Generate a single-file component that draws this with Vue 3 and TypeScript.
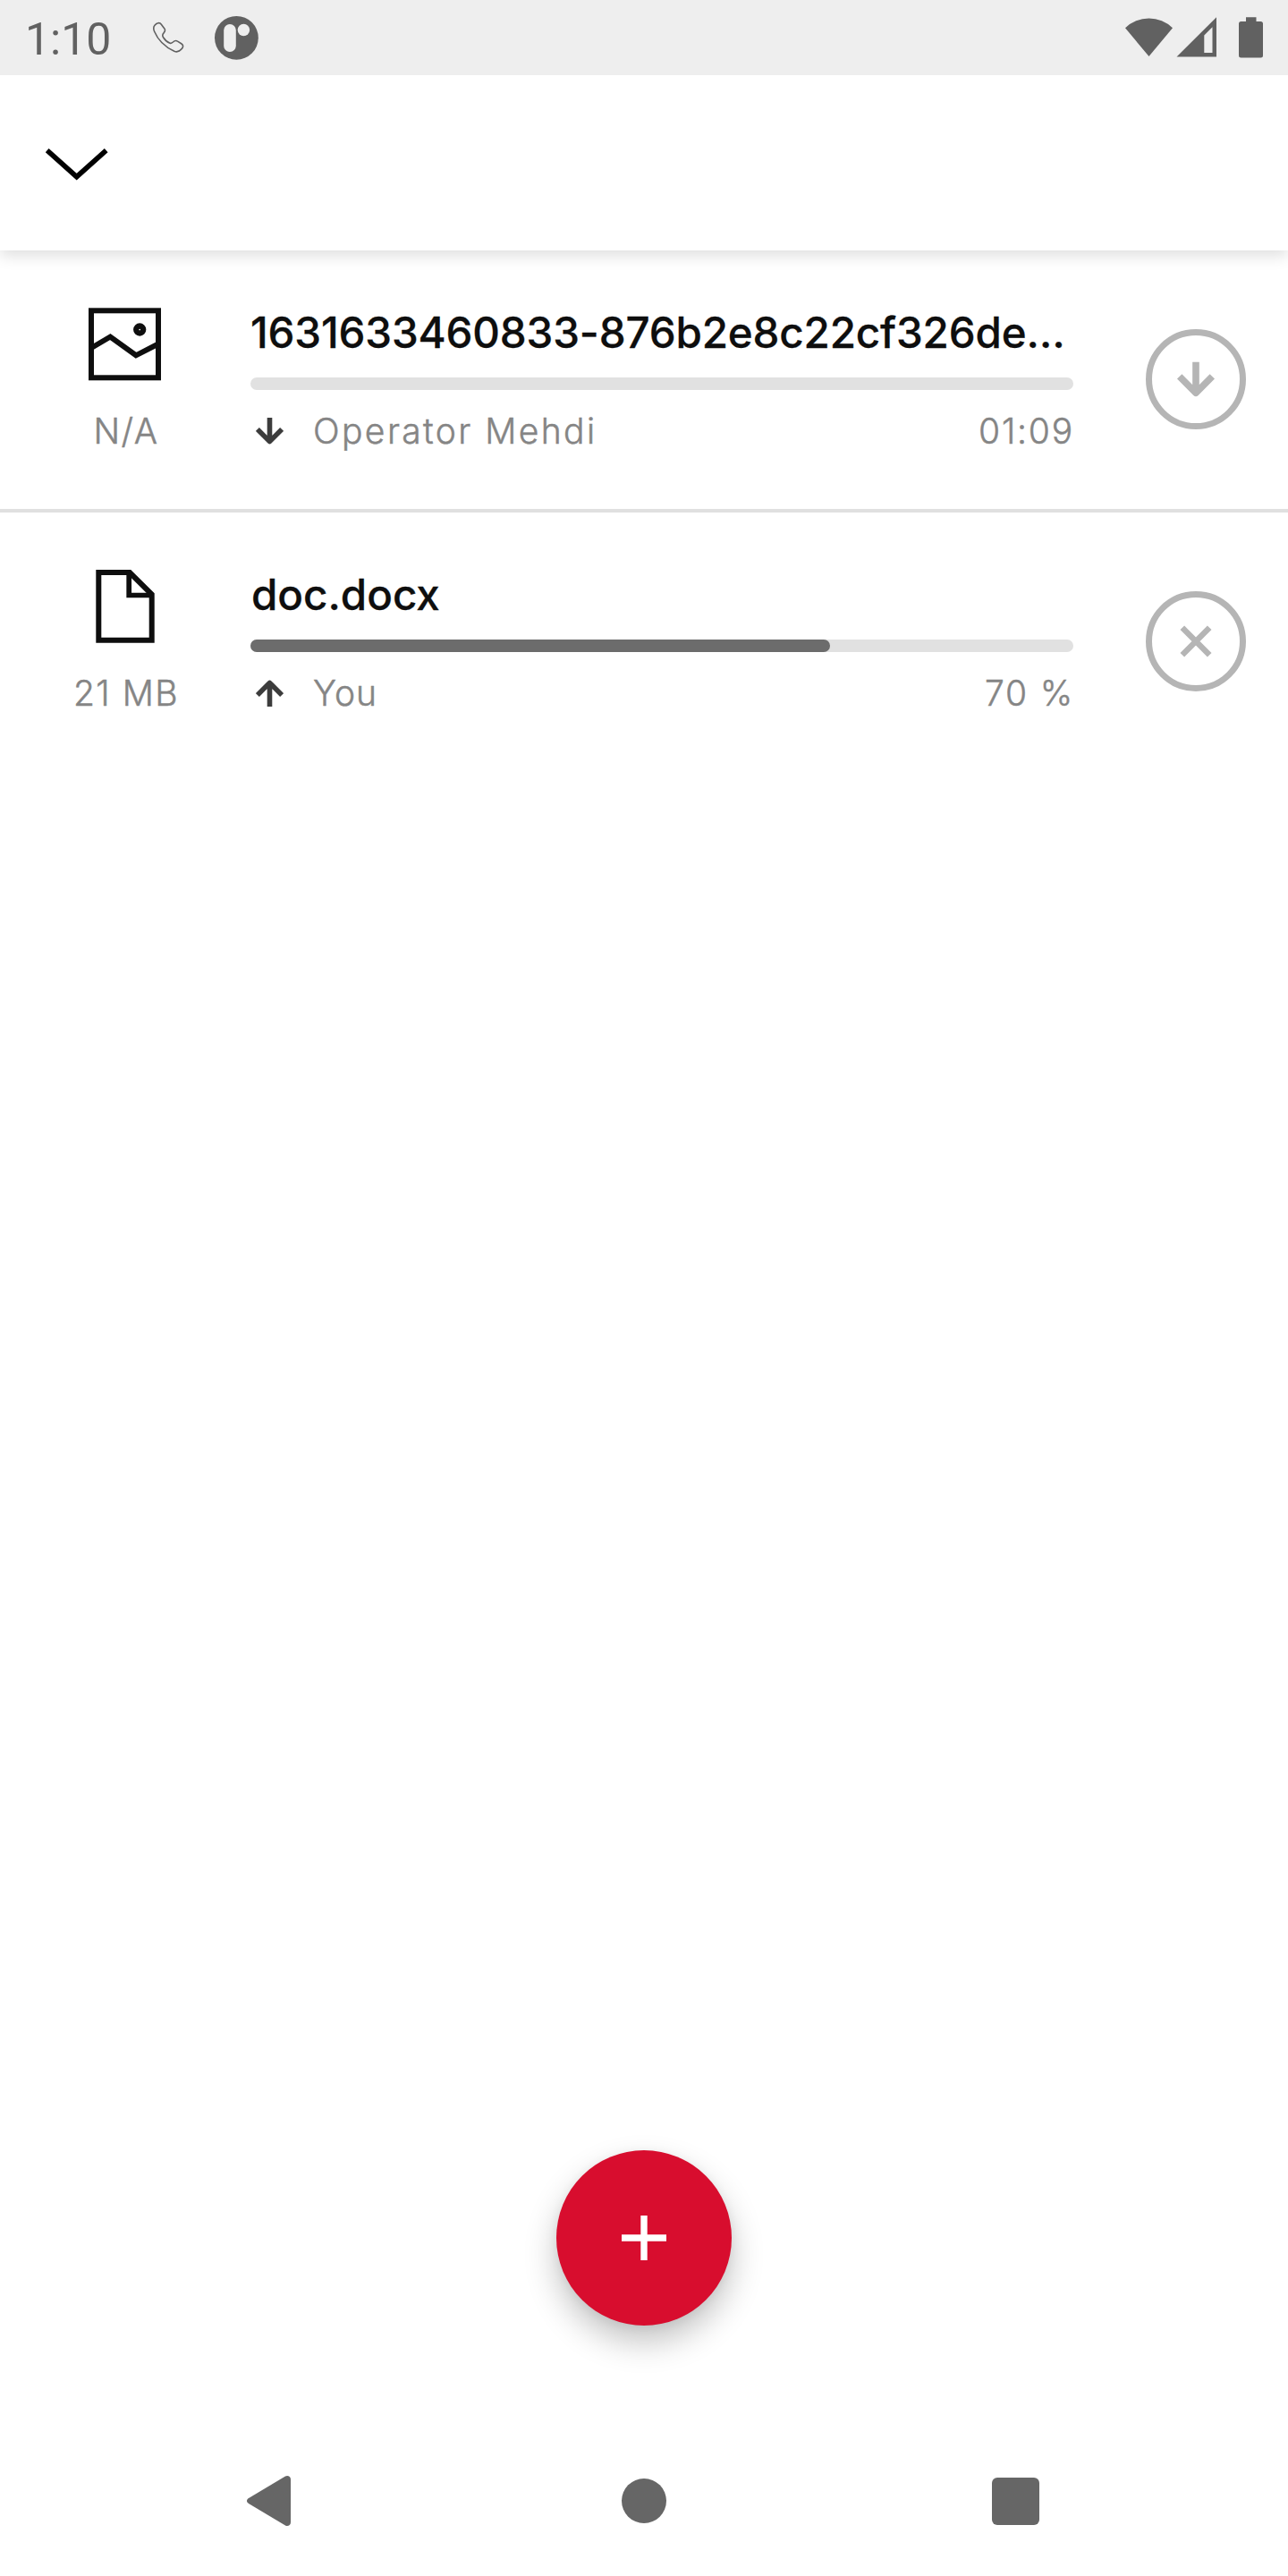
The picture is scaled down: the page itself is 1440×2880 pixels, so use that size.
<script setup lang="ts">
interface Transfer {
  id: string
  kind: 'image' | 'file'
  name: string
  size: string
  direction: 'down' | 'up'
  author: string
  status: string
  progress: number
  action: 'download' | 'cancel'
}

const TRACK = 920
const CAP = 14

const transfers: Transfer[] = [
  {
    id: 'photo',
    kind: 'image',
    name: '1631633460833-876b2e8c22cf326de…',
    size: 'N/A',
    direction: 'down',
    author: 'Operator Mehdi',
    status: '01:09',
    progress: 0,
    action: 'download',
  },
  {
    id: 'doc',
    kind: 'file',
    name: 'doc.docx',
    size: '21 MB',
    direction: 'up',
    author: 'You',
    status: '70 %',
    progress: 0.7,
    action: 'cancel',
  },
]

const fillWidth = (p: number): string => `${(TRACK - CAP) * p + CAP}px`
</script>

<template>
  <div class="screen">
    <header class="status-bar">
      <span class="clock">1:10</span>
      <svg class="phone" width="36" height="36" viewBox="0 0 36 36" fill="none" stroke="#616161" stroke-width="1.600">
        <path d="M3 4.2C5.500 1.200 8.600.800 10.300 3.200L14 8.200C15 9.800 14.600 11 13.200 12.600C11.200 14.600 11.400 16 12.500 17.700C14.500 20.900 17 23 20 24.200C21.700 24.800 22.600 24 23.800 22.800C25.200 21.300 27 21.200 28.500 22.200L33 25C35.400 26.700 34.800 28.800 33.200 30.600C30.800 33.500 28 34.700 24.800 33.300C14.500 28.500 6.500 20.500 2.500 11C1.300 8 1.300 6.200 3 4.200Z" />
      </svg>
      <svg class="brand" width="50" height="50" viewBox="0 0 50 50">
        <circle cx="25.400" cy="25.300" r="24.400" fill="#616161" />
        <rect x="11.200" y="10" width="13.600" height="31" rx="6.800" fill="#eee" />
        <circle cx="33.400" cy="16.500" r="6.700" fill="#eee" />
      </svg>
      <svg class="signals" width="156" height="48" viewBox="0 0 156 48" fill="#616161">
        <path d="M0 14.300A38 38 0 0 1 53 14.300L26.500 46Z" />
        <path fill-rule="evenodd" d="M57.500 46.500L102 2.200V46.500ZM88.300 22.500V42H97.500V13.300Z" />
        <path d="M135 2.300H146.500V7H151.500A2.500 2.500 0 0 1 154 9.500V45A2.500 2.500 0 0 1 151.500 47.500H129.500A2.500 2.500 0 0 1 127 45V9.500A2.500 2.500 0 0 1 129.500 7H135Z" />
      </svg>
    </header>

    <div class="toolbar">
      <svg width="72" height="40" viewBox="0 0 72 40" fill="none" stroke="#000" stroke-width="5.600">
        <path d="M2.700 4.200L35.700 33.700L68.700 4.200" />
      </svg>
    </div>

    <main class="list">
      <section v-for="t in transfers" :key="t.id" class="item" :class="t.id">
        <div class="kind">
          <svg v-if="t.kind === 'image'" width="82" height="82" viewBox="0 0 82 82" fill="none" stroke="#0e0e0e" stroke-width="6">
            <rect x="3" y="3.300" width="75" height="75" />
            <path d="M4 44.500L24.300 32.500L53 53.300L78 40.500" />
            <circle cx="57.200" cy="24.500" r="4" stroke-width="6.300" />
          </svg>
          <svg v-else width="82" height="82" viewBox="0 0 82 82" fill="none" stroke="#0e0e0e" stroke-width="6">
            <path d="M11.300 3H46L70.700 27.500V78.800H11.300Z" />
            <path d="M45.200 3V28.500H70.700" stroke-width="5.700" />
          </svg>
          <span class="meta size">{{ t.size }}</span>
        </div>

        <div class="body">
          <div class="name"><span>{{ t.name }}</span></div>
          <div class="track">
            <div v-if="t.progress > 0" class="fill" :style="{ width: fillWidth(t.progress) }"></div>
          </div>
          <div class="info">
            <svg width="31" height="31" viewBox="0 0 31 31" fill="none" stroke="#3c3c3c" stroke-width="5.600" stroke-linejoin="round">
              <path v-if="t.direction === 'down'" d="M15.500 0V26M1.900 12.900L15.500 26.600L29.100 12.900" />
              <path v-else d="M15.500 30V4M1.900 17.100L15.500 3.400L29.100 17.100" />
            </svg>
            <span class="meta author">{{ t.author }}</span>
            <span class="meta status">{{ t.status }}</span>
          </div>
        </div>

        <button class="action" type="button">
          <svg width="112" height="112" viewBox="0 0 112 112" fill="none" stroke="#b5b5b5">
            <circle cx="56" cy="56" r="52.500" stroke-width="7" />
            <path v-if="t.action === 'download'" d="M56 36.700V71M37.700 52.800L56 71.300L74.300 52.800" stroke-width="7.600" stroke-linejoin="round" />
            <path v-else d="M40.800 40.700L71.200 71.300M71.200 40.700L40.800 71.300" stroke-width="6.500" />
          </svg>
        </button>
      </section>
    </main>

    <footer class="bottom">
      <button class="fab" type="button">
        <svg width="50" height="50" viewBox="0 0 50 50" stroke="#fff" stroke-width="7.400">
          <path d="M25 0V50M0 25H50" />
        </svg>
      </button>
      <nav class="nav">
        <svg width="50" height="56" viewBox="0 0 50 56" fill="#666">
          <path d="M43 .600C45.500-.800 49 .600 49 4V52C49 55.400 45.500 56.800 43 55.400L2 31C-.700 29.300-.700 26.700 2 25Z" />
        </svg>
        <svg class="home" width="50" height="50" viewBox="0 0 50 50" fill="#666"><circle cx="25" cy="25" r="25" /></svg>
        <svg width="53" height="53" viewBox="0 0 53 53" fill="#666"><rect width="53" height="53" rx="6" /></svg>
      </nav>
    </footer>
  </div>
</template>

<style>
body {
  background: #fff;
}
</style>

<style scoped>
.screen {
  width: 1440px;
  height: 2880px;
  display: flex;
  flex-direction: column;
  overflow: hidden;
  background: #fff;
  font-family: Inter, 'Noto Sans', sans-serif;
}
svg {
  display: block;
  flex: none;
}
button {
  border: 0;
  padding: 0;
  background: none;
}
.status-bar {
  position: relative;
  z-index: 1;
  height: 84px;
  flex: none;
  display: flex;
  align-items: flex-start;
  box-sizing: border-box;
  padding: 17px 26px 0 28px;
  background: #eee;
}
.clock {
  width: 141px;
  padding-top: 1px;
  font: 400 50px/52px Roboto, sans-serif;
  color: #616161;
}
.phone {
  margin: 7px 0 0 1px;
}
.brand {
  margin: 0 auto 0 33px;
}
.toolbar {
  height: 196px;
  flex: none;
  box-sizing: border-box;
  padding: 80px 0 0 50px;
  background: #fff;
  box-shadow: 0 6px 16px rgba(0, 0, 0, 0.13);
}
.list {
  flex: 1;
}
.item {
  height: 293px;
  box-sizing: border-box;
  display: grid;
  grid-template-columns: 280px 920px 1fr;
  align-items: start;
}
.photo {
  border-bottom: 4px solid #e0e0e0;
}
.kind {
  display: flex;
  flex-direction: column;
  align-items: center;
  padding-top: 64px;
}
.meta {
  font-size: 39px;
  font-weight: 300;
  line-height: 48px;
  color: #858585;
  -webkit-text-stroke: 0.5px #858585;
  white-space: nowrap;
}
.size {
  margin-top: 32px;
  margin-left: 2px;
  letter-spacing: 1.5px;
}
.body {
  padding-top: 62px;
}
.name {
  height: 60px;
  font-size: 47.500px;
  font-weight: 500;
  line-height: 60px;
  letter-spacing: -0.15px;
  color: #0e0e0e;
  -webkit-text-stroke: 0.3px #0e0e0e;
  white-space: nowrap;
}
.doc .name {
  padding-left: 1px;
  letter-spacing: 0;
}
.track {
  height: 14px;
  margin-top: 20px;
  border-radius: 7px;
  background: #e1e1e1;
}
.fill {
  height: 14px;
  border-radius: 7px;
  background: #6c6c6c;
}
.info {
  display: flex;
  align-items: center;
  margin-top: 22px;
  padding-left: 5.5px;
}
.author {
  margin-left: 33.5px;
  letter-spacing: 2.4px;
}
.doc .author {
  letter-spacing: 0.9px;
}
.status {
  margin-left: auto;
  margin-right: -1px;
  letter-spacing: 1.8px;
}
.action {
  margin: 88px 0 0 81px;
  width: 112px;
}
.bottom {
  display: flex;
  flex-direction: column;
  align-items: center;
}
.fab {
  width: 196px;
  height: 196px;
  border-radius: 50%;
  display: flex;
  align-items: center;
  justify-content: center;
  background: #d80d2e;
  box-shadow: 0 18px 36px rgba(0, 0, 0, 0.24), 0 2px 12px rgba(0, 0, 0, 0.06);
}
.nav {
  width: 1440px;
  height: 168px;
  margin-top: 112px;
  display: flex;
  align-items: center;
  justify-content: space-between;
  box-sizing: border-box;
  padding: 0 278.5px 0 276px;
}
.home {
  margin-left: 4.5px;
}
</style>
